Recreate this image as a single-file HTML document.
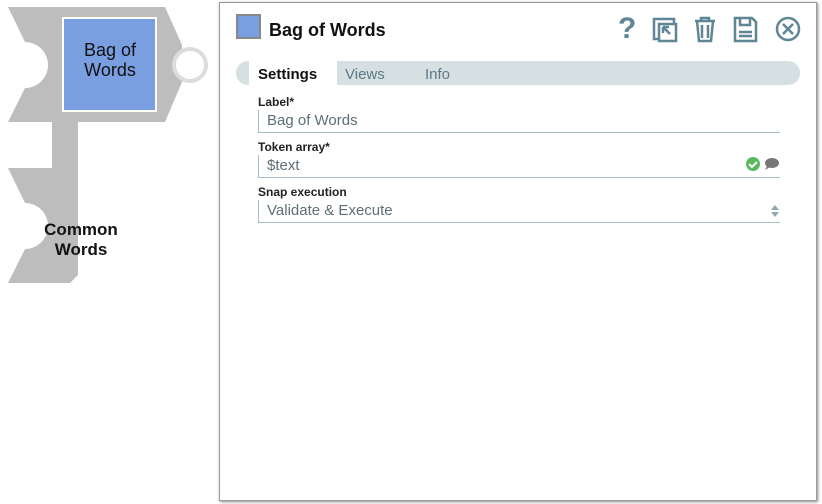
<!DOCTYPE html>
<html><head><style>
body{margin:0;width:822px;height:504px;background:#fff;font-family:"Liberation Sans",sans-serif;position:relative;overflow:hidden}
.abs{position:absolute}
.panel{left:219px;top:2px;width:596px;height:497px;border:1px solid #9a9a9a;box-shadow:1px 1px 3px #888;background:#fff}
.lbl{font-size:12px;font-weight:bold;color:#222}
.inp{border-left:1px solid #a9bcc4;border-bottom:1px solid #a9bcc4;height:23px;font-size:15px;color:#5d6e75;padding-left:8px;line-height:22px;box-sizing:border-box}
</style></head><body>
<svg class="abs" style="left:0;top:0" width="215" height="290">
<path d="M8 7 L165 7 L182 45 L182 82 L165 122 L78 122 L78 168 L52 168 L52 122 L8 122 L25 88 A23 23 0 0 0 25 42 Z" fill="#bdbdbd"/>
<path d="M8 168 L52 168 L78 168 L78 275 L70 283 L8 283 L25 249 A23 23 0 0 0 25 203 Z" fill="#bdbdbd"/>
<circle cx="190" cy="65" r="16" fill="#fff" stroke="#dcdcdc" stroke-width="4"/>
<rect x="63" y="18" width="93" height="93" fill="#799fe0" stroke="#fff" stroke-width="2"/>
<text x="110" y="56" text-anchor="middle" font-size="18" font-family="Liberation Sans" fill="#111">Bag of</text>
<text x="110" y="76" text-anchor="middle" font-size="18" font-family="Liberation Sans" fill="#111">Words</text>
<text x="81" y="235" text-anchor="middle" font-size="17" font-weight="bold" font-family="Liberation Sans" fill="#111">Common</text>
<text x="81" y="255" text-anchor="middle" font-size="17" font-weight="bold" font-family="Liberation Sans" fill="#111">Words</text>
</svg>
<div class="abs panel"></div>
<div class="abs" style="left:236px;top:14px;width:25px;height:25px;background:#799fe0;border:2px solid #888;box-sizing:border-box"></div>
<div class="abs" style="left:269px;top:20px;font-size:18px;font-weight:bold;color:#111">Bag of Words</div>
<svg class="abs" style="left:612px;top:12px" width="195" height="32" fill="none" stroke="#5f8695" stroke-width="2.5">
<text x="6" y="26" font-size="30" font-weight="bold" fill="#5f8695" stroke="none" font-family="Liberation Sans">?</text>
<rect x="42" y="7" width="20" height="20"/><rect x="47" y="12" width="17" height="17" fill="#fff"/><path d="M51 15 L58 22 M51 15 h6 M51 15 v6"/>
<path d="M83 9 h20 M89 9 v-3 h8 v3 M85 9 l2 20 h12 l2 -20 M90 13 v13 M96 13 v13"/>
<path d="M123 6 h17 l4 4 v19 h-21 Z M128 6 v7 h10 v-7 M127 20 h13 M127 24 h13"/>
<circle cx="176" cy="17" r="11"/><path d="M171 12 l10 10 M181 12 l-10 10"/>
</svg>
<div class="abs" style="left:236px;top:61px;width:564px;height:24px;background:#d6dfe2;border-radius:12px"></div>
<div class="abs" style="left:249px;top:61px;width:88px;height:24px;background:#fff"></div>
<div class="abs" style="left:258px;top:66px;font-size:15px;font-weight:bold;color:#111">Settings</div>
<div class="abs" style="left:345px;top:66px;font-size:15px;color:#5d7a87">Views</div>
<div class="abs" style="left:425px;top:66px;font-size:15px;color:#5d7a87">Info</div>
<div class="abs lbl" style="left:258px;top:95px">Label*</div>
<div class="abs inp" style="left:258px;top:110px;width:522px">Bag of Words</div>
<div class="abs lbl" style="left:258px;top:140px">Token array*</div>
<div class="abs inp" style="left:258px;top:155px;width:522px">$text</div>
<svg class="abs" style="left:744px;top:156px" width="36" height="16"><circle cx="9" cy="8" r="7" fill="#5cb85c"/><path d="M5 8 l3 3 l5 -5" stroke="#fff" stroke-width="2" fill="none"/><ellipse cx="28" cy="7" rx="7" ry="5" fill="#777"/><path d="M23 10 l-2 4 l5 -3" fill="#777"/></svg>
<div class="abs lbl" style="left:258px;top:185px">Snap execution</div>
<div class="abs inp" style="left:258px;top:200px;width:522px">Validate &amp; Execute</div>
<svg class="abs" style="left:770px;top:204px" width="10" height="14"><path d="M1 6 L5 1 L9 6Z M1 8 L5 13 L9 8Z" fill="#8fa9b3"/></svg>
</body></html>
